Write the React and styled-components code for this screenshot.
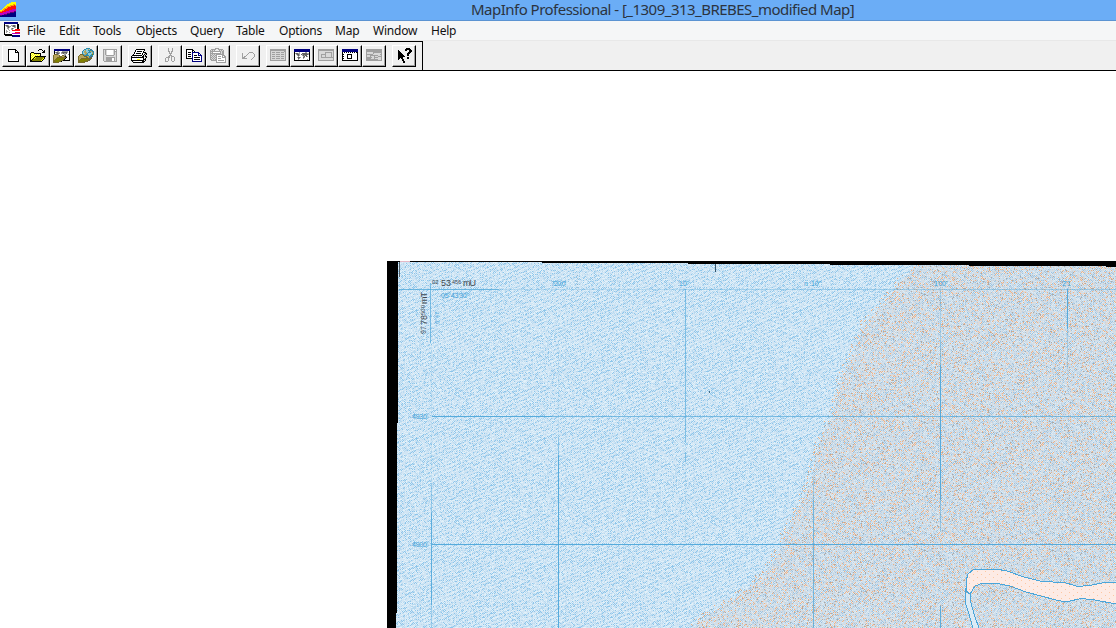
import React from "react";
import styled, { createGlobalStyle } from "styled-components";

const GlobalStyle = createGlobalStyle`
  html, body, #root { margin: 0; height: 100%; }
  body { overflow: hidden; background: #fff; font-family: "Noto Sans", "Open Sans", sans-serif; }
`;

const AppWindow = styled.div`
  display: flex;
  flex-direction: column;
  width: 1116px;
  height: 628px;
  overflow: hidden;
  background: #fff;
`;

const TitleBar = styled.header`
  box-sizing: border-box;
  display: flex;
  flex: none;
  height: 21px;
  background: #6badf6;
  border-bottom: 1px solid #5b93d2;
`;

const AppIconSlot = styled.div`
  width: 16px;
  height: 16px;
  padding-top: 2px;
`;

const Title = styled.h1`
  margin: 0 0 0 455px;
  font-size: 15px;
  font-weight: 400;
  line-height: 19px;
  letter-spacing: ${(p) => p.$tracking}px;
  white-space: nowrap;
  color: #2b3440;
`;

const MenuBar = styled.nav`
  box-sizing: border-box;
  display: flex;
  flex: none;
  height: 20px;
  padding-left: 4px;
  background: #f5f6f7;
  border-bottom: 1px solid #e8e8e8;
`;

const DocIconSlot = styled.div`
  width: 16px;
  padding-top: 1px;
`;

const MenuItem = styled.span`
  box-sizing: border-box;
  flex: none;
  width: ${(p) => p.$width + 14}px;
  padding-left: 7px;
  font-size: 12px;
  line-height: 19px;
  letter-spacing: ${(p) => p.$tracking || 0}px;
  white-space: nowrap;
  color: #111;
`;

const ToolbarDock = styled.div`
  box-sizing: border-box;
  display: flex;
  flex: none;
  height: 30px;
  background: #f0f0f0;
  border-bottom: 1px solid #000;
`;

const Toolbar = styled.div`
  box-sizing: border-box;
  display: flex;
  gap: 6px;
  width: 423px;
  padding: 3px 0 0 2px;
  border-top: 1px solid #000;
  border-right: 1px solid #000;
`;

const ToolGroup = styled.div`
  display: flex;
`;

const ToolButton = styled.button`
  box-sizing: border-box;
  width: 24px;
  height: 22px;
  margin: 0;
  padding: 2px 0 0 ${(p) => (p.$wide ? 2 : 3)}px;
  display: flex;
  align-items: flex-start;
  border: 1px solid #fff;
  border-right-color: #000;
  border-bottom-color: #000;
  background: #f0f0f0;
  box-shadow: inset -1px -1px #a0a0a0;
`;

const IconSvg = styled.svg`
  display: block;
  flex: none;
  overflow: visible;
`;

const MapCanvas = styled.main`
  flex: 1;
  display: flex;
  align-items: flex-end;
  justify-content: flex-end;
  background: #fff;
`;

const INK = {
  k: "#000000", w: "#ffffff", y: "#ffff00", l: "#ffff9c", o: "#808000", g: "#a0a0a0",
  d: "#606060", s: "#d8d8d8", n: "#000080", r: "#ff1010", m: "#c000c0", a: "#ffa000",
  t: "#2e8cab", c: "#8bcde0", e: "#b5a45c", b: "#776a28", p: "#600070",
};

const ICONS = {
  app: [
    "...........yyyyy", ".........yyyyyyy", ".......yyyyyyaay", "......yyyyaaaara",
    ".....yyaaaarrrrr", "....yyaarrrrrrrr", "...yaaarrrrrrrrr", "..yaarrrrrrrmmmm",
    "yyaarrrrrmmmmmmm", "aarrrrmmmmmmmmpp", "rrrmmmmmmmppppnn", "mmmmmmmpppnnnnnn",
    "mmmmpppnnnnnnnnn", "ppnnnnnnnnnnnnnn", "nnnnnnnnnnnnnnnn",
  ],
  doc: [
    "nnnnnnnnnnnnnn..", "nnnnnnnnnnnnnn..", "kwwwwwwwwwwwwkk.", "kgddgwwggddgwkk.",
    "kwgddggwgddgwkk.", "kwwgdgwwwwggwkk.", "kwwggwwgdgwwwkk.", "kwwwgwwggwwrrrrr",
    "kwgwwgwwrrrrrrrr", "kwggwwwwwwwwwwww", "kwgwwgwwwwwrrrrr", "kwwwwwwwmmmmmmmm",
    "kkkkkkkkwwwwwwww", ".kkkkkkkknnnnnnn", "........nnnnnnnn",
  ],
  newFile: [
    "................", "..kkkkkkkk......", "..kwwwwwwkk.....", "..kwwwwwwkwk....",
    "..kwwwwwwkkkk...", "..kwwwwwwwwwk...", "..kwwwwwwwwwk...", "..kwwwwwwwwwk...",
    "..kwwwwwwwwwk...", "..kwwwwwwwwwk...", "..kwwwwwwwwwk...", "..kwwwwwwwwwk...",
    "..kwwwwwwwwwk...", "..kkkkkkkkkkk...",
  ],
  open: [
    "................", ".........kkk....", "........k...k.k.", ".............kk.",
    ".kkk........kkk.", "kylykkkkkkk.....", "klylylylylk.....", "kylylylylyk.....",
    "klylykkkkkkkkkkk", "kylykyooooooook", "klykyooooooooyk.", "kykoooooooooyk..",
    "kkoooooooooyk...", "kkkkkkkkkkkk....",
  ],
  openMap: [
    "................", ".nnnnnnnnnnnnnnnn", ".nnnnnnnnnnnnnnnn", ".kwwggwwwggggggwk",
    ".kgddggwgdddddgwk", ".kwgddgwggdggdwwk", ".bbbdgwwwwwggwwgk", "beeeeebwwbbgdwwwk",
    "beeeeebbbeebkgwwk", "beeebbbbbbbbbkwwk", "beebooooooobkwwwk", "bebooooooobkwwwwk",
    "bboooooobbkkkkkkk", "bboooobbk.......", "bbbbbb..........",
  ],
  openGlobe: [
    "........tttt....", "......ttccecdt..", ".....tceccttttt.", "....tceecccteett",
    "....tceeectttcet", "....tcceetccccet", "..bbbteettccctot", ".beeebtttttcttt.",
    "beeeeebbbeettdt.", "beeeeeeebbetdd..", "beebbbbbbbbbbb..", "bebooooooobbd...",
    "bbooooooobbd....", "bboooobbbb......", "bbbbbbb.........",
  ],
  save: [
    "................", ".gggggggggggggg.", ".gsgswwwwwwsgwg.", ".gsgswwwwwwsggg.",
    ".gsgswwwwwwsgsg.", ".gsgswwwwwwsgsg.", ".gsgswwwwwwsgsg.", ".gssggggggggssg.",
    ".gssssssssssssg.", ".gssgggggggggsg.", ".gssggggggwwgsg.", ".gssggggggwwgsg.",
    ".gssggggggwwgsg.", "..ggggggggggggg.",
  ],
  print: [
    "................", ".....kkkkkkkkk..", "....kwwwwwwwwk..", "....kwkkkkkwk...",
    "...kwwwwwwwwkkk.", "...kwkkkkkwkwskk", "..kwwwwwwwwkwksk", ".kkkkkkkkkkwksk.",
    "kswswswswswkkskk", "kkkkkkkkkkkkkwsk", "kwwwwwwwwwwwksk.", "kwwwwwyyywwwkkk.",
    "kkkkkkkkkkkkksk.", ".kswwwwwwwwkkk..", "..kkkkkkkkkkk...",
  ],
  cut: [
    "......g...g.....", "......g...g.....", "......g...g.....", "......gg.gg.....",
    ".......g.g......", ".......ggg......", "........g.......", ".......ggg......",
    "......gg.ggg....", "....gggg.g..g...", "...g..g..g..g...", "...g..g..g..g...",
    "...g..g..g..g...", "...ggg....gg....",
  ],
  copy: [
    "................", "kkkkkkk.........", "kwwwwwkk........", "kwwwwwkwk.......",
    "kwkkkwnnnnnnn...", "kwwwwwnwwwwwnn..", "kwkkkwnwwwwwnwn.", "kwwwwwnwkkkwnnnn",
    "kwkkkwnwwwwwwwwn", "kwwwwwnwkkkkkkwn", "kkkkkknwwwwwwwwn", "......nwkkkkkkwn",
    "......nwwwwwwwwn", "......nnnnnnnnnn",
  ],
  paste: [
    ".....gggg.......", ".ggggg..ggggg...", "gsgsg....gsgsg..", "gggggggggggsgg..",
    "gsgwwwwwwwgsgg..", "gggggggggggsgg..", "gsgsgsgggggggg..", "ggsgsggwwwwwggg.",
    "gsgsgsgwgggwgwgg", "ggsgsggwwwwwgggg", "gsgsgsgwgggwwwwg", "ggsgsggwwwwwwwwg",
    ".ggggggwggggggwg", "......gwwwwwwwwg", "......gggggggggg",
  ],
  undo: [
    "................", "................", "................", "................",
    ".........gggg...", "..g.....g....g..", "..g....g......g.", "..g...g.......g.",
    "..g.gg........g.", "..ggg........g..", "..ggggg.....g...", "...........g....",
  ],
  browser: [
    "................", "gggggggggggggggg", "gggggggggggggggg", "gsssssssssssssgg",
    "gsgggsggggsgggsg", "gssssssssssssssg", "gsgggsggggsgggsg", "gssssssssssssssg",
    "gsgggsggggsgggsg", "gssssssssssssssg", "gsgggsggggsgggsg", "gssssssssssssssg",
    "gggggggggggggggg",
  ],
  map: [
    "................", "nnnnnnnnnnnnnnnn", "nnnnnnnnnnnnnnnn", "nnnnnnnnnnnnnnnn",
    "kwwwwgwwwwwggwwk", "kgddggwwdddddggk", "kwgddgwdgdddddgk", "kwwgdgwwgdgddwwk",
    "kwwwgwwwwgdwdgwk", "kwwgddgwwdgwwwwk", "kwwwdgwwwgwwwwwk", "kwwwgwwwwwwwwgwk",
    "kkkkkkkkkkkkkkkk",
  ],
  graph: [
    "................", "gggggggggggggggg", "gggggggggggggggg", "gssssssssssssssg",
    "gssssssgggggggsg", "gssssssgsssssgsg", "gssgggggsssssgsg", "gssgsssgsssssgsg",
    "gssgsssgsssssgsg", "gssggggggggggggg", "gssssssssssssssg", "gssssssssssssssg",
    "gggggggggggggggg",
  ],
  layout: [
    "................", "nnnnnnnnnnnnnnnn", "nnnnnnnnnnnnnnnn", "nnnnnnnnnnnnnnnn",
    "kwkwkwkwkwkwkwkk", "kwwwwwwwwwwwwwwk", "kkwwwkkkkkwwwwwk", "kwwwwkwwwkwwwwwk",
    "kkwwwkwwwkwwwwwk", "kwwwwkwwwkwwwwwk", "kkwwwkkkkkwwwwwk", "kwwwwwwwwwwwwwwk",
    "kkkkkkkkkkkkkkkk",
  ],
  redistrict: [
    "................", "gggggggggggggggg", "gggggggggggggggg", "gggggggggggggggg",
    "gssssssggggggggg", "gssssssgsssssssg", "gggggggsssssssgg", "gsssggggggggsssg",
    "gsssgsssgsssgggg", "ggggggssggggsssg", "gggggsssgssssssg", "ggggggggggggsssg",
    "gggggggggggggggg",
  ],
  help: [
    "..........kkkk..", ".........kkkkkk.", "..k......kk..kkk", "..kk.........kkk",
    "..kkk.......kkk.", "..kkkk.....kkk..", "..kkkkk....kk...", "..kkkkkk...kk...",
    "..kkkkkkk.......", "..kkkkk....kk...", "..kk.kk....kk...", "..k...kk........",
    "......kk........", ".......kk.......", ".......kk.......",
  ],
};

function PixelIcon({ name }) {
  const layers = {};
  ICONS[name].forEach((row, y) => {
    [...row].forEach((c, x) => {
      if (c !== ".") layers[c] = (layers[c] || "") + `M${x} ${y}h1v1h-1z`;
    });
  });
  return (
    <IconSvg width="16" height="16" viewBox="0 0 16 16" shapeRendering="crispEdges">
      {Object.entries(layers).map(([c, d]) => <path key={c} d={d} fill={INK[c]} />)}
    </IconSvg>
  );
}

const MENUS = [
  ["File", 18], ["Edit", 20], ["Tools", 29], ["Objects", 40], ["Query", 32],
  ["Table", 29], ["Options", 42], ["Map", 24], ["Window", 44], ["Help", 25],
];

const TOOL_GROUPS = [
  ["newFile", "open", "openMap", "openGlobe", "save"],
  ["print"],
  ["cut", "copy", "paste"],
  ["undo"],
  ["browser", "map", "graph", "layout", "redistrict"],
  ["help"],
];
const WIDE_ICONS = ["openMap", "print"];

// Repeating halftone cell, as printed on the scanned sheet.
const CELL = 128;
function halftone(kind) {
  let seed = kind === "sea" ? 40127 : 91733;
  const rnd = () => {
    seed = (seed + 0x6d2b79f5) | 0;
    let t = Math.imul(seed ^ (seed >>> 15), 1 | seed);
    t = (t + Math.imul(t ^ (t >>> 7), 61 | t)) ^ t;
    return ((t ^ (t >>> 14)) >>> 0) / 4294967296;
  };
  const layers = {};
  for (let y = 0; y < CELL; y++) {
    for (let x = 0; x < CELL; x++) {
      const wave = Math.cos((2 * Math.PI * (14 * x + 32 * y)) / CELL);
      const check = (x + y) % 2 ? 0.2 : -0.2;
      const v = wave * (kind === "sea" ? 0.2 : 0.08) + check + rnd() * 0.9;
      const u = rnd();
      let c = null;
      if (kind !== "sea" && u < 0.13 && (x + y) % 2) c = "#eeb084";
      else if (kind !== "sea" && u > 0.965) c = "#b3a89f";
      else if (kind === "fringe") c = null;
      else if (kind === "land" && u < 0.18) c = "#e2d8d2";
      else if (v > 0.86) c = kind === "land" ? "#9cc3e0" : "#8dc5ea";
      else if (v > 0.62) c = kind === "land" ? "#bdd3e5" : "#b7d9f0";
      else if (v < 0.15) c = kind === "land" ? "#dfecf4" : "#e1f1fa";
      if (c) layers[c] = (layers[c] || "") + `M${x} ${y}h1v1h-1z`;
    }
  }
  return Object.entries(layers);
}
const TEXTURES = { sea: halftone("sea"), land: halftone("land"), fringe: halftone("fringe") };

function Halftone({ id, base, kind }) {
  return (
    <pattern id={id} width={CELL} height={CELL} patternUnits="userSpaceOnUse">
      <rect width={CELL} height={CELL} fill={base} />
      {TEXTURES[kind].map(([c, d]) => <path key={c} d={d} fill={c} shapeRendering="crispEdges" />)}
    </pattern>
  );
}

// x, y, width, height, opacity
const GRID = [
  [399, 289, 100, 1, 0.75], [499, 289, 180, 1, 0.22], [679, 289, 120, 1, 0.35], [799, 289, 317, 1, 0.4],
  [432, 416, 120, 1, 0.9], [552, 416, 564, 1, 0.65], [432, 544, 684, 1, 0.9],
  [430, 283, 1, 60, 0.65], [431, 343, 1, 140, 0.12], [431, 483, 1, 30, 0.45], [431, 513, 1, 92, 0.85], [431, 605, 1, 23, 0.4],
  [558, 340, 1, 97, 0.12], [558, 437, 1, 18, 0.5], [558, 455, 1, 173, 0.9],
  [685, 289, 1, 154, 0.6], [685, 452, 1, 10, 0.6], [685, 462, 1, 80, 0.12],
  [813, 478, 1, 22, 0.4], [813, 500, 1, 128, 0.7],
  [940, 290, 1, 50, 0.3], [940, 340, 1, 25, 0.5], [940, 365, 1, 135, 0.9], [940, 500, 1, 32, 0.45], [940, 606, 1, 22, 0.85],
  [1067, 289, 1, 40, 0.9], [1067, 329, 1, 40, 0.35],
];

function RasterMap() {
  const bank = "M967 592L966 581L968 574L974 569H996L1007 571L1024 577L1040 581L1066 583L1078 586.5L1092 585L1104 582.5L1116 582";
  const shore = "L1095 600L1081 598.5L1066 602L1056 600L1026 592L1010 586L995 583H983L975 586L970 594";
  const coast = "L713 612L735 598L755 583L765 573L777 555L785 535L800 505L812 480L815 457L823 433L833 417L836 400L842 378L853 355L864 325L882 305L897 287";
  return (
    <IconSvg width="729" height="367" viewBox="387 261 729 367">
      <defs>
        <Halftone id="sea" base="#d1e5f4" kind="sea" />
        <Halftone id="land" base="#d0dfeb" kind="land" />
        <Halftone id="fringe" base="none" kind="fringe" />
        <pattern id="sand" width="8" height="6" patternUnits="userSpaceOnUse">
          <rect width="8" height="6" fill="#fdebe5" />
          <path d="M1 1h1v1h-1zM5 4h1v1h-1z" fill="#fcc7a2" />
        </pattern>
      </defs>
      <rect x="387" y="261" width="729" height="367" fill="#000" />
      <g shapeRendering="crispEdges">
        <path
          d="M398 262H542V263H688V264H830V265H969V266H1106V267H1116V628H396V613H397V423H398Z"
          fill="url(#sea)"
        />
        <path d={`M915 265H969V266H1106V267H1116V628H692${coast}Z`} fill="url(#land)" />
        <path d={`M692 627${coast}L906 275`} fill="none" stroke="url(#fringe)" strokeWidth="10" />
        <rect x="400" y="261" width="10" height="1" fill="#e4b9c6" />
        {GRID.map(([x, y, w, h, o]) => (
          <rect key={`${x}-${y}`} x={x} y={y} width={w} height={h} fill="#4aa5d9" opacity={o} />
        ))}
        <path d="M412 606.500H600" stroke="#6fb7e2" strokeDasharray="1 2" opacity="0.35" />
        <path d="M577.500 275V292" stroke="#7d9fb5" strokeDasharray="1 2" opacity="0.6" />
        <rect x="399" y="262" width="1" height="15" fill="#54616a" />
        <rect x="715" y="264" width="1" height="8" fill="#35566c" />
        <rect x="709" y="391" width="1" height="2" fill="#456b85" />
        <path d={`${bank}V604${shore}L967 592Z`} fill="url(#sand)" />
        <path d="M966 593L970 595L971 603L974 614L979 628H973L969 614L966 603Z" fill="#dcebf5" />
        <path d={bank} fill="none" stroke="#4aa5d9" />
        <path d={`M1116 604${shore}`} fill="none" stroke="#4aa5d9" />
        <path
          d="M965.500 588V603L969 614L973 628M966 591L970 594L971 603L974 614L979 628"
          fill="none"
          stroke="#4aa5d9"
        />
      </g>
      <g fontFamily="Liberation Sans, sans-serif" fill="#3f484f">
        <text x="432" y="284" fontSize="6">02</text>
        <text x="441" y="286" fontSize="9">53</text>
        <text x="452" y="284" fontSize="5.500">456</text>
        <text x="463" y="286" fontSize="9" textLength="13">mU</text>
        <g transform="translate(427 334) rotate(-90)">
          <text x="0" y="-1" fontSize="7">97</text>
          <text x="9" y="0" fontSize="9">78</text>
          <text x="19" y="-2" fontSize="6">500</text>
          <text x="30" y="0" fontSize="9" textLength="12">mT</text>
        </g>
      </g>
      <g fontFamily="Liberation Sans, sans-serif" fill="#3d9fd8" fontSize="7">
        <text x="441" y="298" textLength="28">05°43'30"</text>
        <text x="439" y="324" fontSize="6" transform="rotate(-90 439 324)">6°47'</text>
        <text x="551" y="286" textLength="15">720.0'</text>
        <text x="678" y="286" textLength="11">'1'0"</text>
        <text x="804" y="286" textLength="17">n '10"</text>
        <text x="933" y="286" textLength="15">'1'00"</text>
        <text x="1061" y="286" textLength="10">'2'1</text>
        <text x="412" y="419" textLength="16">4930'</text>
        <text x="412" y="547" textLength="16">4900'</text>
      </g>
    </IconSvg>
  );
}

export default function App() {
  return (
    <AppWindow>
      <GlobalStyle />
      <TitleBar>
        <AppIconSlot><PixelIcon name="app" /></AppIconSlot>
        <Title $tracking={-0.52}>MapInfo Professional - [_1309_313_BREBES_modified Map]</Title>
      </TitleBar>
      <MenuBar>
        <DocIconSlot><PixelIcon name="doc" /></DocIconSlot>
        {MENUS.map(([label, width]) => (
          <MenuItem key={label} $width={width} $tracking={-0.22}>{label}</MenuItem>
        ))}
      </MenuBar>
      <ToolbarDock>
        <Toolbar>
          {TOOL_GROUPS.map((group) => (
            <ToolGroup key={group[0]}>
              {group.map((name) => (
                <ToolButton key={name} aria-label={name} $wide={WIDE_ICONS.includes(name)}>
                  <PixelIcon name={name} />
                </ToolButton>
              ))}
            </ToolGroup>
          ))}
        </Toolbar>
      </ToolbarDock>
      <MapCanvas><RasterMap /></MapCanvas>
    </AppWindow>
  );
}
